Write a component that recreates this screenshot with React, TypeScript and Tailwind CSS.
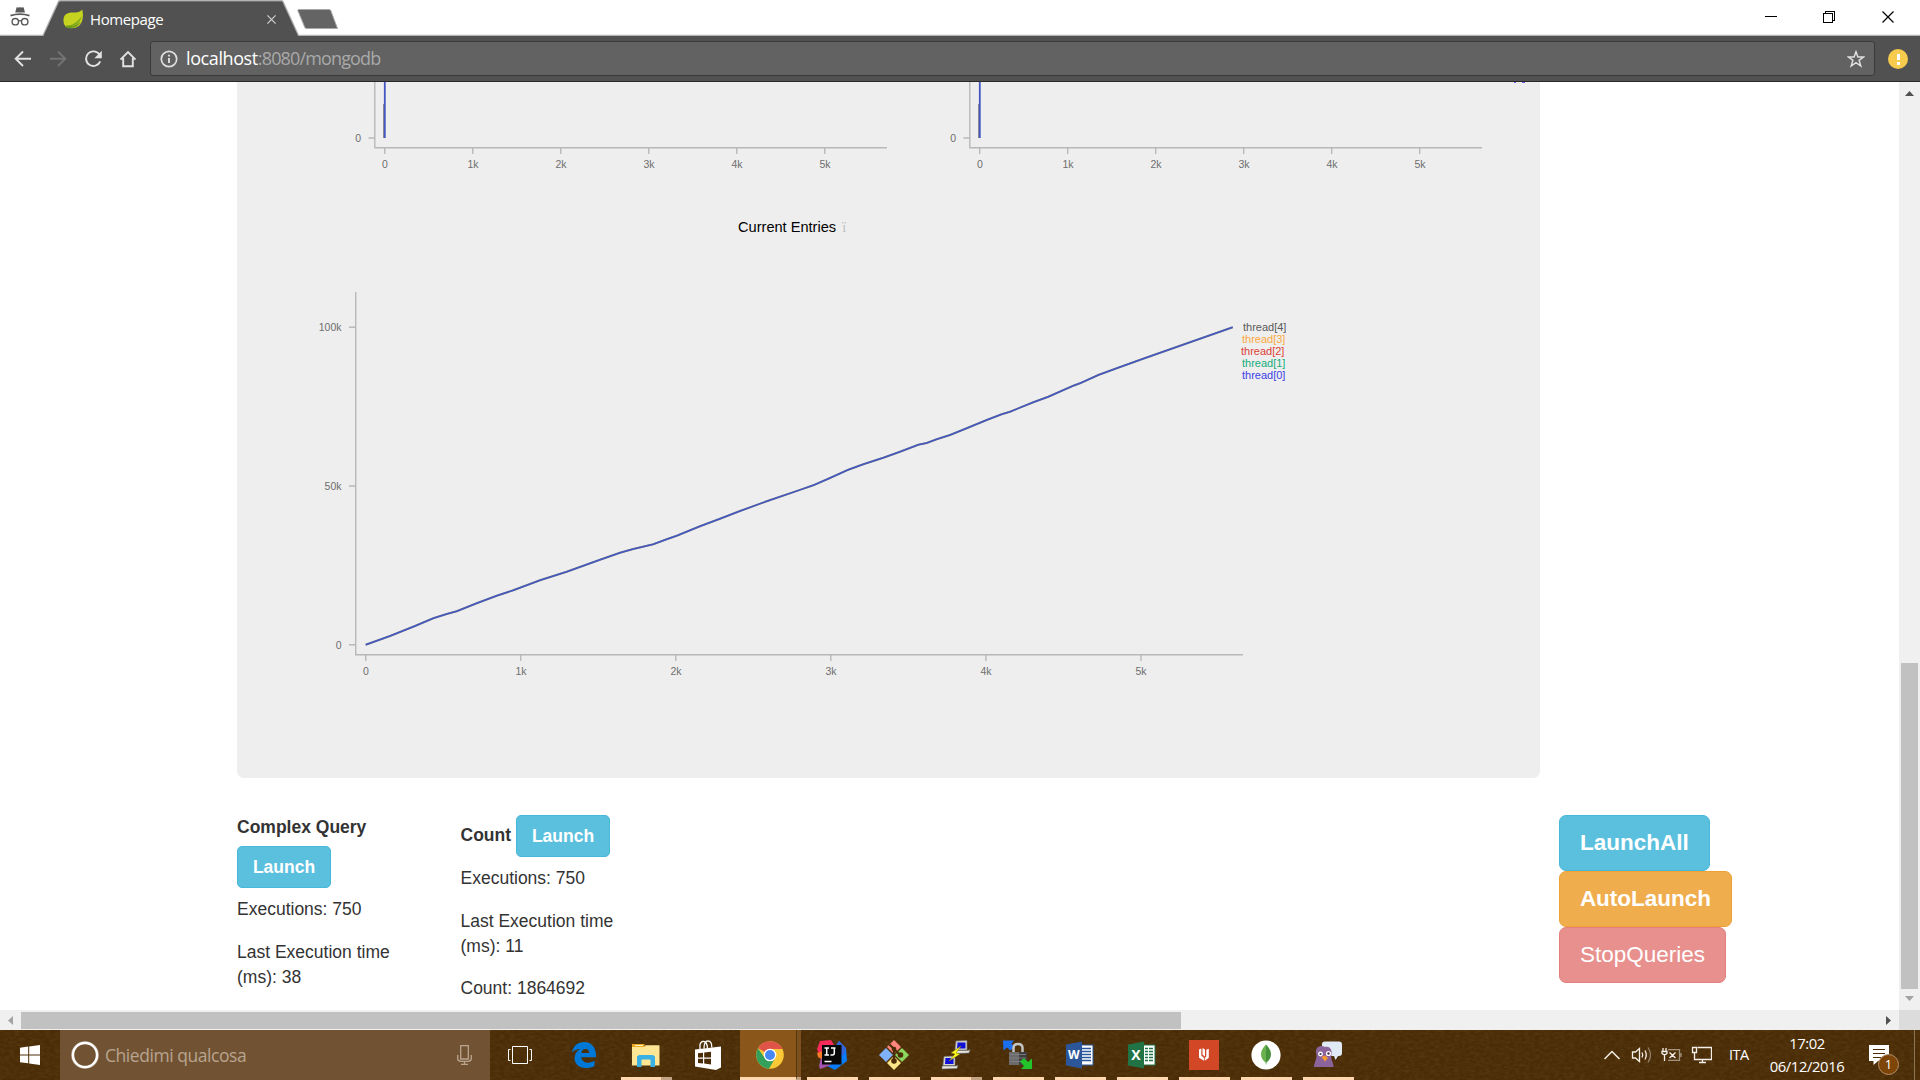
import type { ReactNode } from "react";

const UI = "font-['Open_Sans','Noto_Sans',sans-serif]";

/* ---------- browser chrome ---------- */

function IncognitoIcon() {
  return (
    <svg width="20" height="20" viewBox="10 6 20 20" fill="none" stroke="#5a5a5a">
      <path d="M15.2 12.6 16.6 7.2 18.4 7.6 20 7.2 21.8 7.6 23.6 7.2 25 12.6Z" fill="#5a5a5a" stroke="none" />
      <path d="M10.5 15.6Q20 12.6 29.5 15.6" strokeWidth="1.8" />
      <circle cx="15.3" cy="21.7" r="3.2" strokeWidth="1.4" />
      <circle cx="24.7" cy="21.7" r="3.2" strokeWidth="1.4" />
      <path d="M18.4 21.2Q20 20.2 21.6 21.2" strokeWidth="1.3" />
    </svg>
  );
}

function LeafIcon() {
  return (
    <svg width="21" height="20" viewBox="0 0 21 20">
      <path d="M1 15C-1 7 3 4 8 3.5 13 3.4 16 4 19.2.5 21 8 19.5 14 15.5 17.3 11.5 20 6 19.6 2.6 17.6Z" fill="#c6d420" />
      <path d="M2.5 17C9 16.6 14.5 13.5 18.5 7.2 17.5 14 11.5 17.8 2.5 17Z" fill="#7da41c" />
      <path d="M1.6 17.8 4 16.6C9 18 14 16.2 17.8 12.6 14 19.6 8 20.2 3.4 18.4Z" fill="#6d9b1d" />
    </svg>
  );
}

function TabStrip() {
  return (
    <div className="relative flex h-9 shrink-0 items-start bg-white">
      <svg className="absolute inset-0" width="1920" height="36" viewBox="0 0 1920 36">
        <path d="M0 35.5H43L58.5 1.5Q59 .8 60 .8H281.500Q282.500 .8 283 1.500L298.500 35.500H1920" fill="none" stroke="#b4b4b4" strokeWidth="1.4" />
        <path d="M43.300 36 58.800 2.200 60 1.300H281.500L282.700 2.200 298.200 36Z" fill="#515151" />
        <path d="M298.500 9.500H329Q330.300 9.500 330.800 10.600L337.500 28.500H307Q305.300 28.500 304.800 27.400L297.800 10.400Z" fill="#646464" stroke="#a9a9a9" strokeWidth="1" />
      </svg>
      <div className="relative flex w-full items-start">
        <div className="pt-1.5 pl-2.5"><IncognitoIcon /></div>
        <div className="ml-[33px] flex w-[213px] items-center pt-[9px]">
          <LeafIcon />
          <span className={`${UI} -mt-px ml-[6px] text-[15px] leading-5 tracking-[-0.4px] text-white`}>Homepage</span>
          <svg className="ml-auto" width="9" height="9" viewBox="0 0 9 9" stroke="#d0d0d0" strokeWidth="1.2"><path d="M.4.4 8.600 8.600M8.600.4.4 8.600" /></svg>
        </div>
        <div className="ml-auto flex pt-[11px] pr-[25px]">
          <svg width="130" height="13" viewBox="1765 11 130 13" fill="none" stroke="#000" shapeRendering="crispEdges">
            <path d="M1765 16.500H1777" />
            <path d="M1823.500 13.500H1832.500V22.500H1823.500ZM1825.500 13V11.500H1834.500V20.500H1833" />
            <path d="M1882.500 11.500 1893.500 22.500M1893.500 11.500 1882.500 22.500" shapeRendering="auto" strokeWidth="1.200" />
          </svg>
        </div>
      </div>
    </div>
  );
}

function Toolbar() {
  return (
    <div className="flex h-[46px] shrink-0 items-start border-b border-[#282828] bg-[#515151]">
      <svg className="mt-3.5 ml-3.5" width="124" height="20" viewBox="14 50 124 20" fill="none" stroke="#e2e2e2" strokeWidth="1.900">
        <path d="M31 58.800H16M23 51.500 15.700 58.800 23 66" />
        <path d="M50 58.800H65M58 51.500 65.300 58.800 58 66" stroke="#737373" />
        <path d="M99.600 54.800A7.300 7.300 0 1 0 100.200 61.300" />
        <path d="M101.800 50.800V58.300H94.300Z" fill="#e2e2e2" stroke="none" />
        <path d="M120.500 59.700 128 52 135.500 59.700M123.200 58V66.200H132.800V58" />
      </svg>
      <div className="mt-[5px] ml-3 flex h-[35px] w-[1725px] items-center rounded-[3px] border border-[#3a3a3a] bg-[#626262]">
        <svg className="ml-[9px]" width="18" height="18" viewBox="0 0 18 18" fill="none" stroke="#e0e0e0">
          <circle cx="9" cy="9" r="7.700" strokeWidth="1.700" /><path d="M9 8V13M9 4.800V6.600" strokeWidth="1.900" />
        </svg>
        <div className={`${UI} mb-px ml-2 text-[18px] leading-6 text-[#a9a9a9]`}>
          <span className="tracking-[-0.4px] text-white">localhost</span><span className="tracking-[-0.85px]">:8080/mongodb</span>
        </div>
        <svg className="mr-[9px] ml-auto" width="18" height="18" viewBox="0 0 18 18" fill="none" stroke="#e0e0e0" strokeWidth="1.500">
          <path d="M9 1.800 10.900 7H16.500L12.100 10.400 13.800 16 9 12.700 4.200 16 5.900 10.400 1.500 7H7.100Z" />
        </svg>
      </div>
      <div className="mt-[13px] ml-[13px] flex size-5 flex-col items-center justify-center gap-[2px] rounded-full bg-[#f7cb4d]">
        <div className="h-[6px] w-[3px] bg-white" /><div className="h-[3px] w-[3px] bg-white" />
      </div>
    </div>
  );
}

/* ---------- charts ---------- */

const K = ["0", "1k", "2k", "3k", "4k", "5k"];
const AXIS_TEXT = "font-['Liberation_Sans',Arial,sans-serif] text-[10.500px] fill-[#6e6e6e]";

function SmallChart({ marks }: { marks?: boolean }) {
  return (
    <svg className="shrink-0" width="595" height="118" viewBox="237 82 595 118" overflow="visible">
      <path d="M374.800 82V147.800H887M368.500 138H374.800" fill="none" stroke="#b8b8b8" strokeWidth="1.400" />
      <path d="M383.800 104V138" stroke="#777" strokeWidth="1.200" />
      <path d="M384.800 82V138" stroke="#4257c4" strokeWidth="1.800" />
      <text className={AXIS_TEXT} x="361" y="142" textAnchor="end">0</text>
      {K.map((k, i) => (
        <g key={k}>
          <path d={`M${384.7 + i * 88} 148V154`} stroke="#b8b8b8" strokeWidth="1.400" />
          <text className={AXIS_TEXT} x={385 + i * 88} y="168" textAnchor="middle">{k}</text>
        </g>
      ))}
      {marks && <path d="M919 82.500H921M927 82.500H930" stroke="#6a5af0" />}
    </svg>
  );
}

const LINE =
  "365.700,644.700 390,636 415,626 433.300,618.300 446.700,614 456.700,611.300 476.700,603.300 496.700,595.700 513.300,590.300 540,580.300 566.700,571.700 600,559.700 620,552.700 633.300,549 653.300,544.300 666.700,539.300 676.700,535.700 700,526.300 720,518.700 740,511 766.700,501.300 800,489.900 813.300,485.300 830,478 848.300,469.700 863.300,464.300 883.300,457.700 900,451.700 918.300,444.800 926.700,443 936.700,439.300 950,435 966.700,428.300 986.700,420 1001.700,414.300 1010,411.700 1033.300,402.300 1048.300,396.700 1073.300,385.700 1080,383.300 1098.300,375 1116.700,368.300 1141.700,359.300 1232.700,327.300";

const LEGEND = [
  { n: 4, x: 1243, c: "fill-[#5a5a5a]" },
  { n: 3, x: 1242, c: "fill-[#fba93c]" },
  { n: 2, x: 1241, c: "fill-[#dc3f36]" },
  { n: 1, x: 1242, c: "fill-[#14ad7c]" },
  { n: 0, x: 1242, c: "fill-[#4040e8]" },
];

function EntriesChart() {
  return (
    <svg width="1303" height="430" viewBox="237 280 1303 430">
      <path d="M355.700 292V654.700H1243M349 644.700H355.700M349 486H355.700M349 327.300H355.700" fill="none" stroke="#b8b8b8" strokeWidth="1.400" />
      {["100k", "50k", "0"].map((t, i) => (
        <text key={t} className={AXIS_TEXT} x="341.500" y={331 + i * 158.8} textAnchor="end">{t}</text>
      ))}
      {K.map((k, i) => (
        <g key={k}>
          <path d={`M${365.7 + i * 155.05} 655V661`} stroke="#b8b8b8" strokeWidth="1.400" />
          <text className={AXIS_TEXT} x={366 + i * 155} y="675" textAnchor="middle">{k}</text>
        </g>
      ))}
      <polyline points={LINE} fill="none" stroke="#8a8a8a" strokeWidth="2" />
      <polyline points={LINE} fill="none" stroke="#4257c0" strokeWidth="1.500" />
      {LEGEND.map((l, i) => (
        <text key={l.n} className={`font-['Liberation_Sans',Arial,sans-serif] text-[11px] ${l.c}`} x={l.x} y={331 + i * 12}>
          {`thread[${l.n}]`}
        </text>
      ))}
    </svg>
  );
}

/* ---------- page ---------- */

function Launch() {
  return <button className="h-[42px] w-[94px] rounded-[5px] border border-[#46b8da] bg-[#5bc0de] font-bold text-white">Launch</button>;
}

function Page() {
  return (
    <div className="h-full min-w-0 flex-1 overflow-hidden bg-white pl-[237px] font-['Liberation_Sans',Arial,sans-serif] text-[17.500px] leading-[25px] text-[#333]">
      <div className="h-[696px] w-[1303px] overflow-hidden rounded-b-[7px] bg-[#eee]">
        <div className="flex"><SmallChart /><SmallChart marks /></div>
        <div className="flex h-20 items-start pt-[15px] pl-[501px] text-[14.600px] text-black">
          Current Entries<span className="ml-[6px] font-['Liberation_Serif',serif] text-[14px] text-[#bdbdbd]">ï</span>
        </div>
        <EntriesChart />
      </div>
      <div className="flex pt-[37px]">
        <div className="w-[223.500px]">
          <div className="font-bold">Complex Query</div>
          <div className="mt-[6px] h-[42px]"><Launch /></div>
          <p className="mt-[9px]">Executions: 750</p>
          <p className="mt-[18px]">Last Execution time<br />(ms): 38</p>
        </div>
        <div className="w-[223.500px]">
          <div className="flex items-center gap-[5px]"><b className="-mt-[1px]">Count</b><Launch /></div>
          <p className="mt-[9px]">Executions: 750</p>
          <p className="mt-[18px]">Last Execution time<br />(ms): 11</p>
          <p className="mt-[17px]">Count: 1864692</p>
        </div>
        <div className="ml-auto flex w-[340px] flex-col items-start text-[22.500px] text-white">
          <button className="h-14 w-[151px] rounded-[7px] border border-[#46b8da] bg-[#5bc0de] pb-px font-bold">LaunchAll</button>
          <button className="h-14 w-[173px] rounded-[7px] border border-[#eea236] bg-[#f0ad4e] pb-px font-bold">AutoLaunch</button>
          <button className="h-14 w-[167px] rounded-[7px] border border-[#e4807d] bg-[#e7908e] pb-px">StopQueries</button>
        </div>
      </div>
    </div>
  );
}

function VerticalScrollbar() {
  return (
    <div className="flex w-[21px] shrink-0 flex-col items-center bg-[#f0f0f0]">
      <svg className="mt-[9px]" width="9" height="5" viewBox="0 0 9 5"><path d="M0 5 4.500 0 9 5Z" fill="#505050" /></svg>
      <div className="mt-[567px] h-[326px] w-[17px] bg-[#c1c1c1]" />
      <svg className="mt-[7px]" width="9" height="5" viewBox="0 0 9 5"><path d="M0 0H9L4.500 5Z" fill="#a3a3a3" /></svg>
    </div>
  );
}

function HorizontalScrollbar() {
  return (
    <div className="flex h-5 shrink-0 items-center bg-[#f0f0f0]">
      <svg className="ml-2" width="5" height="9" viewBox="0 0 5 9"><path d="M5 0V9L0 4.500Z" fill="#a3a3a3" /></svg>
      <div className="ml-2 h-[17px] w-[1160px] bg-[#c1c1c1]" />
      <svg className="mr-2 ml-auto" width="5" height="9" viewBox="0 0 5 9"><path d="M0 0V9L5 4.500Z" fill="#505050" /></svg>
      <div className="h-5 w-[21px] bg-[#dcdcdc]" />
    </div>
  );
}

/* ---------- taskbar ---------- */

type AppItem = { name: string; icon: ReactNode; bar?: "full" | "split" };

const APPS: AppItem[] = [
  {
    name: "edge",
    icon: (
      <svg width="26" height="28" viewBox="571 1041 26 28">
        <path d="M572 1052.600C573 1046 578 1042 584 1042 592 1042 596.500 1048 596 1057.200H581.200C581.600 1060.800 584.600 1062.700 588 1062.700 590.500 1062.700 592.700 1061.900 594.500 1060.800V1065.900C592 1067.300 589 1068 586 1068 578.500 1068 574.400 1063.500 574.500 1058 574.600 1054 576.800 1050.800 580.500 1049 577 1049 574 1050.400 572 1052.600ZM581.300 1053H589.200C589.200 1050.500 587.800 1048.900 585.500 1048.900 583.200 1048.900 581.700 1050.600 581.300 1053Z" fill="#0078d7" />
      </svg>
    ),
  },
  {
    name: "files",
    bar: "split",
    icon: (
      <svg width="28" height="24" viewBox="0 0 28 24">
        <path d="M0 1H12.500V4H0Z" fill="#e8a923" /><path d="M0 4H12L13.500 2.200H27.500V22.500H0Z" fill="#ffe694" />
        <path d="M3 2H11V3H3Z" fill="#fff3c4" />
        <path d="M5 13.500 7 12H21L23 13.500V24H18.500V17.500Q18.500 16.500 17.500 16.500H10.500Q9.500 16.500 9.500 17.500V24H5Z" fill="#3bb1e3" />
      </svg>
    ),
  },
  {
    name: "store",
    icon: (
      <svg width="26" height="30" viewBox="0 0 26 30">
        <path d="M0 9.500 26 6.500V27.500L21 30 0 26.500Z" fill="#fff" />
        <path d="M5 9V4.500Q6 1 9 1.500 12 2 12.500 8M9 8.500Q9 1 13 .8 17 1 16.800 7.500" fill="none" stroke="#fff" strokeWidth="1.300" />
        <path d="M3 13.200 8 12.700V17.500H3ZM9.200 12.600 16 11.800V17.500H9.200ZM3 18.700H8V23.500L3 22.900ZM9.200 18.700H16V24.400L9.200 23.600Z" fill="#4a2c06" />
      </svg>
    ),
  },
  {
    name: "chrome",
    icon: (
      <svg width="28" height="28" viewBox="0 0 28 28">
        <circle cx="14" cy="14" r="13.800" fill="#fbc935" />
        <path d="M14 14 2 7.200A13.800 13.800 0 0 1 26.400 7.900H14Z" fill="#df5348" />
        <path d="M2 7.200A13.800 13.800 0 0 0 13 27.800L19.200 17 8.700 17Z" fill="#33a05b" />
        <circle cx="14" cy="14" r="6.300" fill="#fff" /><circle cx="14" cy="14" r="5" fill="#4687f4" />
      </svg>
    ),
  },
  {
    name: "idea",
    bar: "full",
    icon: (
      <svg width="30" height="30" viewBox="0 0 30 30">
        <path d="M3 1 14 0 19 8 4 20 0 9Z" fill="#f8295b" /><path d="M0 13 6 11V20L1 17Z" fill="#f97b27" />
        <path d="M18 7 22 1 29 8 30 21 18 30 10 26 22 20Z" fill="#087cfa" /><path d="M18 7 22 1 29 8 26 16Z" fill="#3563d8" />
        <path d="M4 18 14 25 3 29 2 26Z" fill="#a354ad" />
        <rect x="5" y="5" width="19.500" height="19.500" fill="#080808" />
        <path d="M7.500 8H12M9.700 8V15M7.500 15H12M14 8H18.500M17.300 8V13Q17.300 15 15.500 15H13.500" fill="none" stroke="#fff" strokeWidth="1.500" />
        <path d="M7.500 21.500H14.500" stroke="#fff" strokeWidth="1.500" />
      </svg>
    ),
  },
  {
    name: "git",
    bar: "full",
    icon: (
      <svg width="30" height="30" viewBox="0 0 30 30">
        <path d="M15 0 22 7 15 14 8 7Z" fill="#ff8580" /><path d="M23 8 30 15 23 22 16 15Z" fill="#8bd65c" />
        <path d="M7 8 14 15 7 22 0 15Z" fill="#7fb2fb" /><path d="M15 16 22 23 15 30 8 23Z" fill="#fce588" />
        <path d="M10.500 4.500 15 9V22M15 9 21 15" fill="none" stroke="#4a2c06" strokeWidth="2.200" />
        <circle cx="15" cy="9" r="2.300" fill="#4a2c06" /><circle cx="21.500" cy="15" r="2.800" fill="#4a2c06" /><circle cx="15" cy="21" r="2.800" fill="#4a2c06" />
      </svg>
    ),
  },
  {
    name: "putty",
    bar: "split",
    icon: (
      <svg width="30" height="30" viewBox="0 0 30 30">
        {[{ x: 13, y: 0 }, { x: 1, y: 15.500 }].map((p) => (
          <g key={p.x} transform={`translate(${p.x} ${p.y})`}>
            <path d="M2 1 13 .5V10H1Z" fill="#d5d5d0" stroke="#777" strokeWidth=".6" /><path d="M3.500 2.500H11.500V8.500H3Z" fill="#1010d8" />
            <path d="M0 10.500H14L16 9.500 15 13 0 13.500Z" fill="#e8e8e2" stroke="#666" strokeWidth=".6" />
          </g>
        ))}
        <path d="M20 6 10 13 14 14 8 21 19 14 15 13Z" fill="#ffff1a" stroke="#857a00" strokeWidth=".5" />
      </svg>
    ),
  },
  {
    name: "lock",
    bar: "full",
    icon: (
      <svg width="30" height="30" viewBox="0 0 30 30">
        <path d="M0 .5H11L8.500 3.500 11 7 7.500 10.500 4 7.500.500 10.500Z" fill="#1a70f0" />
        <path d="M10.500 13V8Q10.500 4 15 4T19.500 8V13" fill="none" stroke="#c4c4c4" strokeWidth="2.500" />
        <path d="M6 12H24V23L21 25H6Z" fill="#3f3f3f" /><path d="M6 12H16V25H6Z" fill="#6b6b6b" /><path d="M7 14.500H23M7 18H23M7 21.500H21" stroke="#848484" strokeWidth=".8" />
        <path d="M29 29H18L21 26 17 21.500 21 18 25 22 29 18.500Z" fill="#22c32b" />
      </svg>
    ),
  },
  {
    name: "word",
    bar: "full",
    icon: (
      <svg width="28" height="28" viewBox="0 0 28 28">
        <rect x="13" y="4" width="14" height="20" fill="#fff" stroke="#2b579a" /><path d="M16 7.500H25M16 10.500H25M16 13.500H25M16 16.500H25M16 19.500H25" stroke="#2b579a" strokeWidth="1.300" />
        <path d="M0 3.500 16 .5V27.500L0 24.500Z" fill="#2b579a" />
        <text x="7.800" y="18.300" textAnchor="middle" className="fill-white font-['Open_Sans',sans-serif] text-[12px] font-bold">W</text>
      </svg>
    ),
  },
  {
    name: "excel",
    bar: "full",
    icon: (
      <svg width="28" height="28" viewBox="0 0 28 28">
        <rect x="13" y="4" width="14" height="20" fill="#fff" stroke="#217346" /><path d="M17 7.500H25M17 10.500H25M17 13.500H25M17 16.500H25M17 19.500H25" stroke="#217346" strokeWidth="1.700" /><path d="M20.500 6V22" stroke="#fff" />
        <path d="M0 3.500 16 .5V27.500L0 24.500Z" fill="#217346" />
        <text x="8" y="19.200" textAnchor="middle" className="fill-white font-['Open_Sans',sans-serif] text-[14px] font-bold">X</text>
      </svg>
    ),
  },
  {
    name: "reader",
    bar: "full",
    icon: (
      <svg width="30" height="30" viewBox="0 0 30 30">
        <rect width="30" height="30" fill="#d24726" />
        <path d="M10 9.500 12.300 8.500V15.500L15 18V20.800L10 17.800ZM13.500 8 16 9.500V16.800L13.500 14.500ZM17.300 9.800 19.800 8.800V17.800L15.800 20.800V18L17.300 16.500Z" fill="#fff" />
      </svg>
    ),
  },
  {
    name: "mongo",
    bar: "full",
    icon: (
      <svg width="30" height="30" viewBox="0 0 30 30">
        <circle cx="15" cy="15" r="14.600" fill="#fff" /><path d="M15 4.500Q10 9.500 10 14.500 10.200 19 14.500 22.500L15 25Z" fill="#6bb04f" /><path d="M15 4.500Q20 9.500 20 14.500 19.800 19 15.500 22.500L15 25Z" fill="#45923b" />
      </svg>
    ),
  },
  {
    name: "pidgin",
    bar: "full",
    icon: (
      <svg width="30" height="30" viewBox="0 0 30 30">
        <path d="M12 1.500H26Q29 1.500 29 4.500V13Q29 16 26 16H25L22.500 20 21 16H12Q9 16 9 13V4Q9 1.500 12 1.500Z" fill="#dfeaf5" />
        <path d="M3 13C2 7 8 4.500 12 7 16 5.500 19.500 9 18.500 14.500 17 19 21 23 20.500 27H1C1 22 5 18 3 13Z" fill="#8b649c" />
        <circle cx="7.500" cy="14" r="2.400" fill="#fff" /><circle cx="15.500" cy="13.500" r="2.600" fill="#fff" /><circle cx="7.500" cy="14" r="1.100" fill="#44334c" /><circle cx="15.500" cy="13.500" r="1.200" fill="#44334c" />
        <path d="M8.500 17 12 15.500 15 18 12 21.500Z" fill="#f79a30" />
      </svg>
    ),
  },
];

function AppButton({ item }: { item: AppItem }) {
  if (item.name === "chrome") {
    return (
      <div className="relative flex h-full w-[62px] pl-px">
        <div className="flex w-14 items-center justify-center border-b-3 border-[#ffd8b2] bg-[#8e591b]/95 pt-[2px] pl-1">{item.icon}</div>
        <div className="w-[5px] border-b-3 border-l border-b-[#c5a385] border-l-[#55380f] bg-[#7b501e]" />
      </div>
    );
  }
  return (
    <div className="relative flex h-full w-[62px] flex-col items-center">
      <div className="flex flex-1 items-center pt-[3px]">{item.icon}</div>
      <div className="flex h-[3px] w-[51px]">
        {item.bar && <div className="flex-1 bg-[#ffd8b2]" />}
        {item.bar === "split" && <div className="w-[11px] bg-[#c5a385]" />}
      </div>
    </div>
  );
}

function Taskbar() {
  return (
    <div className={`relative flex h-[50px] shrink-0 overflow-hidden bg-[#4a2d07] text-white ${UI}`}>
      <svg className="absolute inset-0" width="1920" height="50">
        <filter id="leather">
          <feTurbulence type="fractalNoise" baseFrequency="0.2 0.35" numOctaves="3" seed="4" />
          <feColorMatrix values="0 0 0 0 0.5  0 0 0 0 0.33  0 0 0 0 0.1  0.9 0 0 0 -0.3" />
        </filter>
        <rect width="1920" height="50" filter="url(#leather)" opacity="0.22" />
      </svg>
      <div className="relative flex w-[60px] items-center justify-center">
        <svg width="20" height="20" viewBox="0 0 20 20" fill="#fff"><path d="M0 2.800 8.200 1.600V9.400H0ZM9.200 1.500 20 0V9.400H9.200ZM0 10.400H8.200V18.300L0 17.200ZM9.200 10.400H20V20L9.200 18.500Z" /></svg>
      </div>
      <div className="relative flex w-[430px] items-center bg-[#715334]">
        <svg className="ml-[11px]" width="28" height="28" viewBox="0 0 28 28" fill="none"><circle cx="14" cy="14" r="12.600" stroke="#fff" strokeOpacity=".5" strokeWidth="2.500" /><circle cx="14" cy="14" r="12" stroke="#fff" strokeWidth="2.400" /></svg>
        <span className="ml-[6px] text-[17.500px] tracking-[-0.45px] text-[#b8a48f]">Chiedimi qualcosa</span>
        <svg className="mr-[18px] ml-auto" width="15" height="20" viewBox="0 0 15 20" fill="none" stroke="#b9a48e" strokeWidth="1.300">
          <path d="M3.700.7H11.300V14H3.700ZM.7 10V13.500Q.7 16.300 4 16.300H11Q14.300 16.300 14.300 13.500V10M7.500 16.300V19M4 19.300H11" />
        </svg>
      </div>
      <div className="relative flex w-[63px] items-center pl-[18px]">
        <svg width="24" height="18" viewBox="0 0 24 18" fill="none" stroke="#fff" strokeWidth="1"><path d="M4.500.5H19.500V17.500H4.500ZM2.500 3.500H.5V14.500H2.500M21.500 3.500H23.500V14.500H21.500" /></svg>
      </div>
      {APPS.map((a) => <AppButton key={a.name} item={a} />)}
      <div className="relative ml-auto flex items-center">
        <svg width="108" height="20" viewBox="1604 1045 108 20" fill="none" stroke="#f4efe8" strokeWidth="1.300">
          <path d="M1604.500 1059 1612 1051.500 1619.500 1059" strokeWidth="1.500" />
          <path d="M1632.500 1052H1635.500L1639.500 1048.500V1061.500L1635.500 1058H1632.500ZM1642 1052.500Q1643.500 1055 1642 1057.500M1645 1050.500Q1647.500 1055 1645 1059.500" />
          <path d="M1648 1047.500Q1653 1055 1648 1062.500" stroke="#93806a" />
          <path d="M1668 1049.700H1679.500V1060.300H1668M1681 1053V1057" stroke="#a39480" />
          <path d="M1663 1048V1051M1666 1048V1051M1662 1051.500H1667V1053.500Q1664.500 1056 1662 1053.500ZM1664.500 1055V1061M1669.500 1052.500 1675.500 1058M1675.500 1052.500 1669.500 1058" />
          <path d="M1697.500 1047.500H1711.500V1059.500H1694.500V1053M1692.500 1047.500H1696.500V1052.500H1692.500ZM1702.500 1060V1062.500M1699 1062.500H1706" />
        </svg>
        <span className="ml-[17px] w-[24px] text-[14.500px] tracking-[-0.5px]">ITA</span>
        <div className="ml-3.5 flex w-20 flex-col items-center text-[14.800px] leading-[23px] tracking-[-0.4px] whitespace-nowrap"><span>17:02</span><span>06/12/2016</span></div>
        <div className="relative ml-[22px] h-5 w-[45px]">
          <svg width="20" height="20" viewBox="0 0 20 20"><path d="M0 0H20V16H9L4.500 20V16H0Z" fill="#fff" /><path d="M4 4.500H16M4 8.500H16M4 12.500H12" stroke="#4a2d07" strokeWidth="1.200" /></svg>
          <div className="absolute top-[9px] left-[9px] flex size-[21px] items-center justify-center rounded-full border border-[#b3906a] bg-[#7d4508] text-[13px]">1</div>
        </div>
        <div className="h-[50px] w-[6px] border-l border-[#8b7558]" />
      </div>
    </div>
  );
}

export default function App() {
  return (
    <div className="flex h-[1080px] w-[1920px] flex-col overflow-hidden bg-white">
      <TabStrip />
      <Toolbar />
      <div className="flex h-[928px] shrink-0"><Page /><VerticalScrollbar /></div>
      <HorizontalScrollbar />
      <Taskbar />
    </div>
  );
}
